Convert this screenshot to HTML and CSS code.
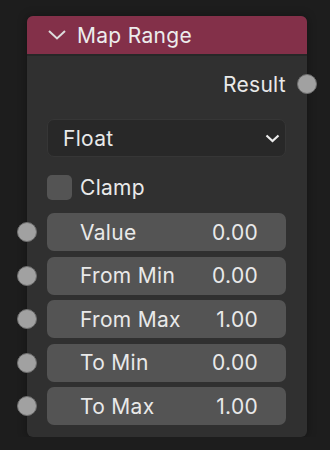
FILE: index.html
```html
<!DOCTYPE html>
<html lang="en">
<head>
    <meta charset="UTF-8">
    <title>Map Range</title>
    <link rel="stylesheet" href="styles.css">
</head>
<body>
    <div class="node">
        <div class="node-header">
            <svg class="collapse-icon" width="20" height="10" viewBox="0 0 20 10">
                <path d="M2 1 L10 8.5 L18 1" fill="none" stroke="#dcdcdc" stroke-width="2"/>
            </svg>
            <span class="node-title">Map Range</span>
        </div>

        <div class="node-body">
            <div class="output-row">
                <span>Result</span>
                <span class="socket socket-out"></span>
            </div>

            <div class="dropdown">
                <span>Float</span>
                <svg width="15" height="9" viewBox="0 0 15 9">
                    <path d="M1.5 1.5 L7.5 7 L13.5 1.5" fill="none" stroke="#ececec" stroke-width="2.2"/>
                </svg>
            </div>

            <div class="checkbox-row">
                <span class="checkbox"></span>
                <span>Clamp</span>
            </div>

            <div class="inputs">
                <div class="field"><span class="socket"></span><span>Value</span><span class="field-value">0.00</span></div>
                <div class="field"><span class="socket"></span><span>From Min</span><span class="field-value">0.00</span></div>
                <div class="field"><span class="socket"></span><span>From Max</span><span class="field-value">1.00</span></div>
                <div class="field"><span class="socket"></span><span>To Min</span><span class="field-value">0.00</span></div>
                <div class="field"><span class="socket"></span><span>To Max</span><span class="field-value">1.00</span></div>
            </div>
        </div>
    </div>
</body>
</html>
```

FILE: styles.css
```css
body {
    margin: 0;
    background: #1d1d1d;
    font-family: Inter, 'DejaVu Sans', sans-serif;
    font-size: 21px;
    letter-spacing: 0.3px;
    color: #e9e9e9;
}

.node {
    margin: 16px 0 0 27px;
    width: 280px;
    background: #303030;
    border-radius: 6px;
    box-shadow: 0 0 10px rgba(0, 0, 0, 0.35);
}

.node-header {
    height: 38px;
    background: #833049;
    border-radius: 6px 6px 0 0;
    border-bottom: 2px solid #272727;
    display: flex;
    align-items: center;
    padding-left: 20px;
    gap: 10px;
}

.node-title {
    color: #ececec;
}

.node-body {
    padding: 0 21px 12px 20px;
}

.output-row {
    height: 44px;
    margin-top: 6px;
    display: flex;
    align-items: center;
    justify-content: flex-end;
    position: relative;
}

.socket {
    position: absolute;
    width: 18px;
    height: 18px;
    border-radius: 50%;
    background: #a1a1a1;
    border: 1px solid #6e6e6e;
    left: -30px;
    top: 50%;
    margin-top: -10px;
}

.socket-out {
    left: auto;
    right: -31px;
}

.dropdown {
    margin-top: 13px;
    height: 36px;
    background: #282828;
    border: 1px solid #363636;
    border-radius: 7px;
    display: flex;
    align-items: center;
    justify-content: space-between;
    padding: 0 5px 0 15px;
}

.checkbox-row {
    margin-top: 18px;
    height: 25px;
    display: flex;
    align-items: center;
    gap: 8px;
}

.checkbox {
    width: 25px;
    height: 25px;
    background: #545454;
    border-radius: 5px;
}

.inputs {
    margin-top: 13px;
    display: flex;
    flex-direction: column;
    gap: 5.5px;
}

.field {
    position: relative;
    height: 38px;
    background: #545454;
    border-radius: 7px;
    display: flex;
    align-items: center;
    padding: 0 28px 0 33px;
}

.field-value {
    margin-left: auto;
}
```
